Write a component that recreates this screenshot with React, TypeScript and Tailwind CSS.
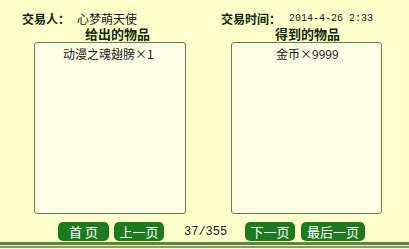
const font = { fontFamily: '"Noto Sans CJK SC", sans-serif' }

function PageButton({ label, w, spaced }: { label: string; w: string; spaced?: boolean }) {
  return (
    <button
      className={`${w} h-[19px] rounded-[5px] bg-[#1e7a1e] text-white text-[13px] leading-[19px] flex items-center justify-center ${spaced ? 'tracking-[3px] pl-[3px]' : ''}`}
    >
      {label}
    </button>
  )
}

export default function App() {
  return (
    <div
      className="w-[409px] h-[249px] bg-[#ffffcc] text-[#102a06] flex flex-col overflow-hidden"
      style={font}
    >
      <div className="flex pt-[11px]">
        <div className="ml-[22px] w-[164px] flex flex-col">
          <div className="h-[14px] flex items-center text-[12px] leading-[13px]">
            <span className="font-bold">交易人：</span>
            <span className="ml-[7px] text-[#1a1a1a]">心梦萌天使</span>
          </div>
          <div className="h-[17px] pt-[2px] pl-[63px] text-[13px] leading-[13px] font-bold">给出的物品</div>
          <div className="ml-[12px] w-[152px] h-[172px] bg-[#ffffe6] border border-[#62804a] rounded-[3px] pt-[4px] pl-[28px] text-[12px] leading-[14px] text-[#1a1a1a]">
            动漫之魂翅膀×1
          </div>
        </div>
        <div className="ml-[35px] w-[161px] flex flex-col">
          <div className="h-[14px] flex items-center text-[12px] leading-[13px]">
            <span className="font-bold">交易时间：</span>
            <span className="ml-[8px] text-[10px] text-[#1a1a1a]" style={{ fontFamily: '"Liberation Mono", monospace' }}>
              2014-4-26 2:33
            </span>
          </div>
          <div className="h-[17px] pt-[2px] pl-[54px] text-[13px] leading-[13px] font-bold">得到的物品</div>
          <div className="ml-[10px] w-[151px] h-[172px] bg-[#ffffe6] border border-[#62804a] rounded-[3px] pt-[4px] pl-[44px] text-[12px] leading-[14px] text-[#1a1a1a]">
            金币×9999
          </div>
        </div>
      </div>

      <div className="flex items-center mt-[8px] pl-[58px] h-[19px]">
        <PageButton label="首页" w="w-[51px]" spaced />
        <div className="ml-[5px]">
          <PageButton label="上一页" w="w-[50px]" />
        </div>
        <span
          className="ml-[20px] w-[43px] text-[12px] text-[#1a1a1a]"
          style={{ fontFamily: '"Liberation Mono", monospace' }}
        >
          37/355
        </span>
        <div className="ml-[18px]">
          <PageButton label="下一页" w="w-[50px]" />
        </div>
        <div className="ml-[6px]">
          <PageButton label="最后一页" w="w-[64px]" />
        </div>
      </div>

      <div className="mt-[1px] h-[3px] bg-[#5c8a2c]" />
      <div className="h-[1px] bg-[#e8f0c0]" />
      <div className="h-[2px] bg-[#8a9a6a]" />
      <div className="flex-1 bg-[#f4f8dc]" />
    </div>
  )
}
